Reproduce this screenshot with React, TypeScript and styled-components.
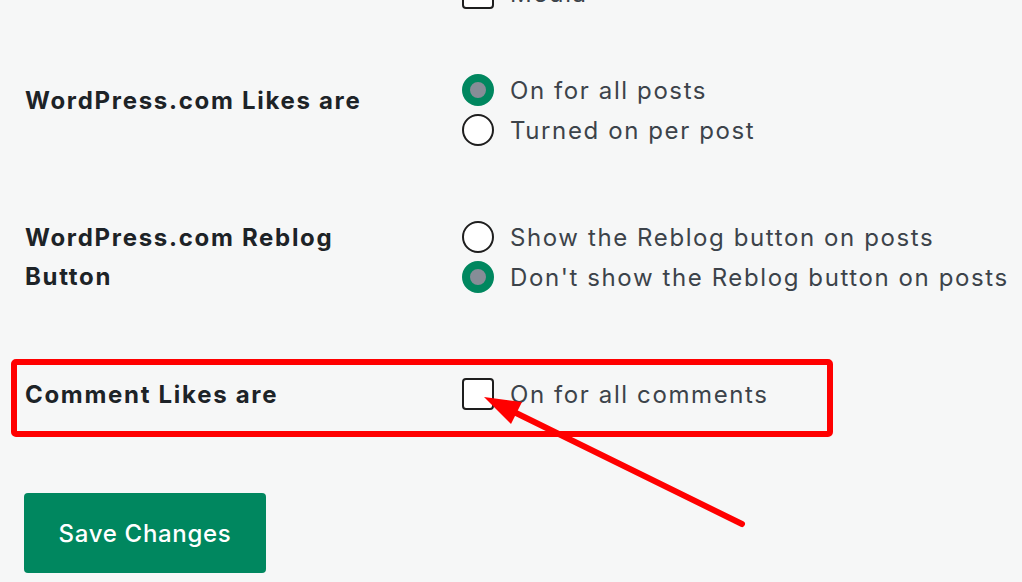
import styled, { createGlobalStyle } from 'styled-components';

const GlobalStyle = createGlobalStyle`
  html, body {
    margin: 0;
    padding: 0;
    background: #f6f7f7;
    overflow: hidden;
  }
  body {
    font-family: Inter, "Noto Sans", "Liberation Sans", sans-serif;
    color: #1d2327;
  }
`;

const Page = styled.div`
  position: relative;
  width: 1022px;
  height: 582px;
  overflow: hidden;
`;

const Form = styled.div`
  display: flex;
  flex-direction: column;
  padding-left: 25px;
  margin-top: -27px;
`;

const Row = styled.div<{ $gap: number }>`
  display: grid;
  grid-template-columns: 437px 1fr;
  margin-top: ${(p) => p.$gap}px;
`;

const Label = styled.div<{ $offset?: number }>`
  font-size: 24px;
  font-weight: 650;
  letter-spacing: 1.7px;
  line-height: 39px;
  color: #1d2327;
  padding-top: ${(p) => p.$offset ?? 0}px;
`;

const Options = styled.div`
  display: flex;
  flex-direction: column;
`;

const Option = styled.label`
  display: flex;
  align-items: center;
  gap: 16px;
  height: 40px;
  font-size: 24px;
  letter-spacing: 1.6px;
  color: #3c434a;
  white-space: nowrap;
`;

const Radio = styled.span<{ $checked?: boolean }>`
  box-sizing: border-box;
  width: 32px;
  height: 32px;
  border-radius: 50%;
  flex-shrink: 0;
  background: ${(p) => (p.$checked ? '#868d97' : '#fff')};
  border: ${(p) => (p.$checked ? '8px solid #00875f' : '2.5px solid #1e1e1e')};
`;

const Checkbox = styled.span`
  box-sizing: border-box;
  width: 32px;
  height: 32px;
  border-radius: 4px;
  flex-shrink: 0;
  background: #fff;
  border: 2.5px solid #1e1e1e;
`;

const SaveButton = styled.button`
  align-self: flex-start;
  margin-top: 79px;
  margin-left: -1px;
  width: 242px;
  height: 80px;
  border: none;
  border-radius: 4px;
  background: #00875f;
  color: #fff;
  font-family: Inter, "Noto Sans", "Liberation Sans", sans-serif;
  font-size: 24px;
  font-weight: 500;
  letter-spacing: 0.7px;
  cursor: pointer;
`;

const Annotation = styled.svg`
  position: absolute;
  left: 0;
  top: 0;
  pointer-events: none;
`;

export default function App() {
  return (
    <Page>
      <GlobalStyle />
      <Form>
        <Row $gap={0}>
          <Label />
          <Options>
            <Option>
              <Checkbox />
              Media
            </Option>
          </Options>
        </Row>

        <Row $gap={57}>
          <Label $offset={11}>WordPress.com Likes are</Label>
          <Options>
            <Option>
              <Radio $checked />
              On for all posts
            </Option>
            <Option>
              <Radio />
              Turned on per post
            </Option>
          </Options>
        </Row>

        <Row $gap={67}>
          <Label $offset={1}>
            WordPress.com Reblog
            <br />
            Button
          </Label>
          <Options>
            <Option>
              <Radio />
              Show the Reblog button on posts
            </Option>
            <Option>
              <Radio $checked />
              Don't show the Reblog button on posts
            </Option>
          </Options>
        </Row>

        <Row $gap={77}>
          <Label $offset={1}>Comment Likes are</Label>
          <Options>
            <Option>
              <Checkbox />
              On for all comments
            </Option>
          </Options>
        </Row>

        <SaveButton>Save Changes</SaveButton>
      </Form>

      <Annotation width="1022" height="582" viewBox="0 0 1022 582">
        <rect x="14" y="362" width="816" height="72" rx="2" fill="none" stroke="#ff0000" strokeWidth="6" />
        <line x1="742" y1="524" x2="514" y2="412" stroke="#ff0000" strokeWidth="6" strokeLinecap="round" />
        <polygon points="484,397 522,402 511,424" fill="#ff0000" />
      </Annotation>
    </Page>
  );
}
